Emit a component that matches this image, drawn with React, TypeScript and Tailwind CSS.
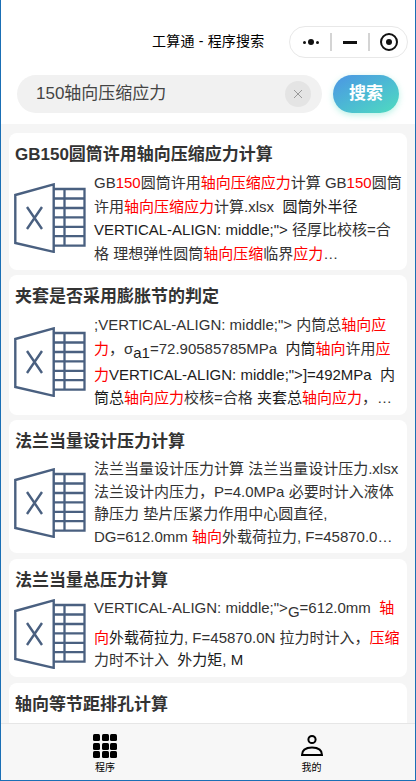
import React from "react";

const R = ({ children }: { children: React.ReactNode }) => <span className="text-[#ff0000]">{children}</span>;
const K = ({ children }: { children: React.ReactNode }) => <span className="text-[#1c1c1c]">{children}</span>;

function Excel() {
  return (
    <svg width="72" height="70" viewBox="0 0 72 70" className="-ml-[1px] shrink-0" fill="none" stroke="#4a6080" strokeWidth="2.3">
      <path d="M1.3 12 L39.7 1.4 V68.8 L1.3 60 Z" strokeWidth="2.4" />
      <path d="M13 24 L28 46 M28 24 L13 46" strokeWidth="2.4" />
      <path d="M40 6 H70.5 V62.7 H40" />
      <path d="M40 15.5 H70.5 M40 25 H70.5 M40 34.4 H70.5 M40 43.8 H70.5 M40 53.2 H70.5" />
      <path d="M50.5 6 V62.7" />
    </svg>
  );
}

function Card({ title, children, className, leading }: { title: string; children?: React.ReactNode; className: string; leading?: string }) {
  return (
    <div className={`mx-2 shrink-0 rounded-lg bg-white pl-[6px] pr-[3px] ${className}`}>
      <div className="pt-[10px] text-[17px] leading-[24px] font-bold text-[#333]">{title}</div>
      {children && (
        <div className="mt-[4px] flex items-center gap-[8px] pb-[5px]">
          <Excel />
          <div className={`w-[310px] shrink-0 text-[15px] text-[#333] ${leading}`}>{children}</div>
        </div>
      )}
    </div>
  );
}

export default function App() {
  return (
    <div
      className="flex h-[781px] w-[416px] flex-col overflow-hidden border-x border-b border-[#1a6fb5] bg-[#f5f5f5] text-black"
      style={{ fontFamily: '"Liberation Sans", "Noto Sans CJK SC", sans-serif' }}
    >
      <div className="shrink-0 bg-white">
        <div className="flex h-[75px] items-center pt-[9px]">
          <div className="mb-[2px] ml-[151px] text-[14px] leading-[20px] tracking-[0.2px] whitespace-pre">工算通 - 程序搜索</div>
          <div className="ml-[25px] flex h-[32px] w-[119px] items-center rounded-full border border-[#e8e8e8]">
            <div className="flex w-[40px] items-center justify-center gap-[2px] pl-[2px]">
              <span className="h-[3px] w-[3px] rounded-full bg-[#111]" />
              <span className="h-[6px] w-[6px] rounded-full bg-[#111]" />
              <span className="h-[3px] w-[3px] rounded-full bg-[#111]" />
            </div>
            <span className="h-[18px] w-[2px] bg-[#d4d4d4]" />
            <div className="flex w-[36px] justify-center">
              <span className="h-[3px] w-[14px] bg-[#111]" />
            </div>
            <span className="h-[18px] w-[2px] bg-[#d4d4d4]" />
            <div className="flex flex-1 justify-center">
              <span className="flex h-[18px] w-[18px] items-center justify-center rounded-full border-[2px] border-[#111]">
                <span className="h-[6px] w-[6px] rounded-full bg-[#111]" />
              </span>
            </div>
          </div>
        </div>
        <div className="flex h-[49px] items-start">
          <div className="ml-[16px] flex h-[38px] w-[305px] items-center rounded-full bg-[#f1f1f1] pl-[19px] pr-[11px]">
            <span className="flex-1 text-[17px] leading-[40px] text-[#444]">150轴向压缩应力</span>
            <span className="flex h-[26px] w-[26px] items-center justify-center rounded-full bg-[#e4e4e4]">
              <svg width="10" height="10" viewBox="0 0 10 10" stroke="#999" strokeWidth="1">
                <path d="M1 1 L9 9 M9 1 L1 9" />
              </svg>
            </span>
          </div>
          <div className="ml-[11px] flex h-[38px] w-[66px] items-center justify-center rounded-full bg-gradient-to-br from-[#4c94e4] to-[#50dcbe] text-[17px] font-bold text-white shadow-[0_2px_6px_rgba(80,220,190,0.4)]">
            搜索
          </div>
        </div>
      </div>
      <div className="flex min-h-0 flex-1 flex-col overflow-hidden pt-[9px]">
        <Card title="GB150圆筒许用轴向压缩应力计算" className="mb-[5px]" leading="leading-[23.5px]">
          GB<R>150</R>圆筒许用<R>轴向压缩应力</R>计算 GB<R>150</R>圆筒许用<R>轴向压缩应力</R>计算.xlsx&nbsp; <K>圆筒外半径 VERTICAL-ALIGN: middle;"&gt;</K> 径厚比校核=合格 理想弹性圆筒<R>轴向压缩</R>临界<R>应力</R>…
        </Card>
        <Card title="夹套是否采用膨胀节的判定" className="mb-[5px]" leading="leading-[23.75px]">
          ;VERTICAL-ALIGN: middle;"&gt; 内筒总<R>轴向应力</R>，σ<sub className="bottom-0 align-[-4px] text-[15px] leading-[19.75px] text-[#1c1c1c]">a1</sub>=72.90585785MPa&nbsp; <K>内筒</K><R>轴向</R>许用<R>应力</R><K>VERTICAL-ALIGN: middle;"&gt;]=492MPa&nbsp; 内筒总</K><R>轴向应力</R>校核=合格 <K>夹套总</K><R>轴向应力</R>，…
        </Card>
        <Card title="法兰当量设计压力计算" className="mb-[6px]" leading="leading-[22.5px]">
          法兰当量设计压力计算 法兰当量设计压力.xlsx 法兰设计内压力，P=4.0MPa 必要时计入液体静压力 垫片压紧力作用中心圆直径, DG=612.0mm <R>轴向</R>外载荷拉力, F=45870.0…
        </Card>
        <Card title="法兰当量总压力计算" className="mb-[6px]" leading="leading-[22.5px]">
          VERTICAL-ALIGN: middle;"&gt;<sub className="bottom-0 align-[-4px] text-[15px] leading-[29.5px]">G</sub>=612.0mm&nbsp; <R>轴向</R><K>外载荷拉力</K>, F=45870.0N 拉力时计入，<R>压缩</R>力时不计入&nbsp; <K>外力矩, M</K>
        </Card>
        <Card title="轴向等节距排孔计算" className="h-[137px]" />
      </div>
      <div className="flex h-[57px] shrink-0 border-t border-[#e6e6e6] bg-[#f7f7f7]">
        <div className="flex w-[207px] flex-col items-center pt-[10px] pl-[1px]">
          <div className="grid grid-cols-3 gap-[1.5px]">
            {[0, 1, 2, 3, 4, 5, 6, 7, 8].map((i) => (
              <span key={i} className="h-[7px] w-[7px] rounded-[1.5px] bg-black" />
            ))}
          </div>
          <span className="mt-[3px] text-[10px] leading-[14px]">程序</span>
        </div>
        <div className="flex flex-1 flex-col items-center pt-[9px]">
          <svg width="24" height="24" viewBox="0 0 24 24" fill="none" stroke="#000" strokeWidth="2">
            <circle cx="12" cy="6.5" r="3.6" />
            <path d="M2 22 C2 16.5 6 14.5 12 14.5 C18 14.5 22 16.5 22 22 Z" />
          </svg>
          <span className="mt-[4px] text-[10px] leading-[14px]">我的</span>
        </div>
      </div>
    </div>
  );
}
